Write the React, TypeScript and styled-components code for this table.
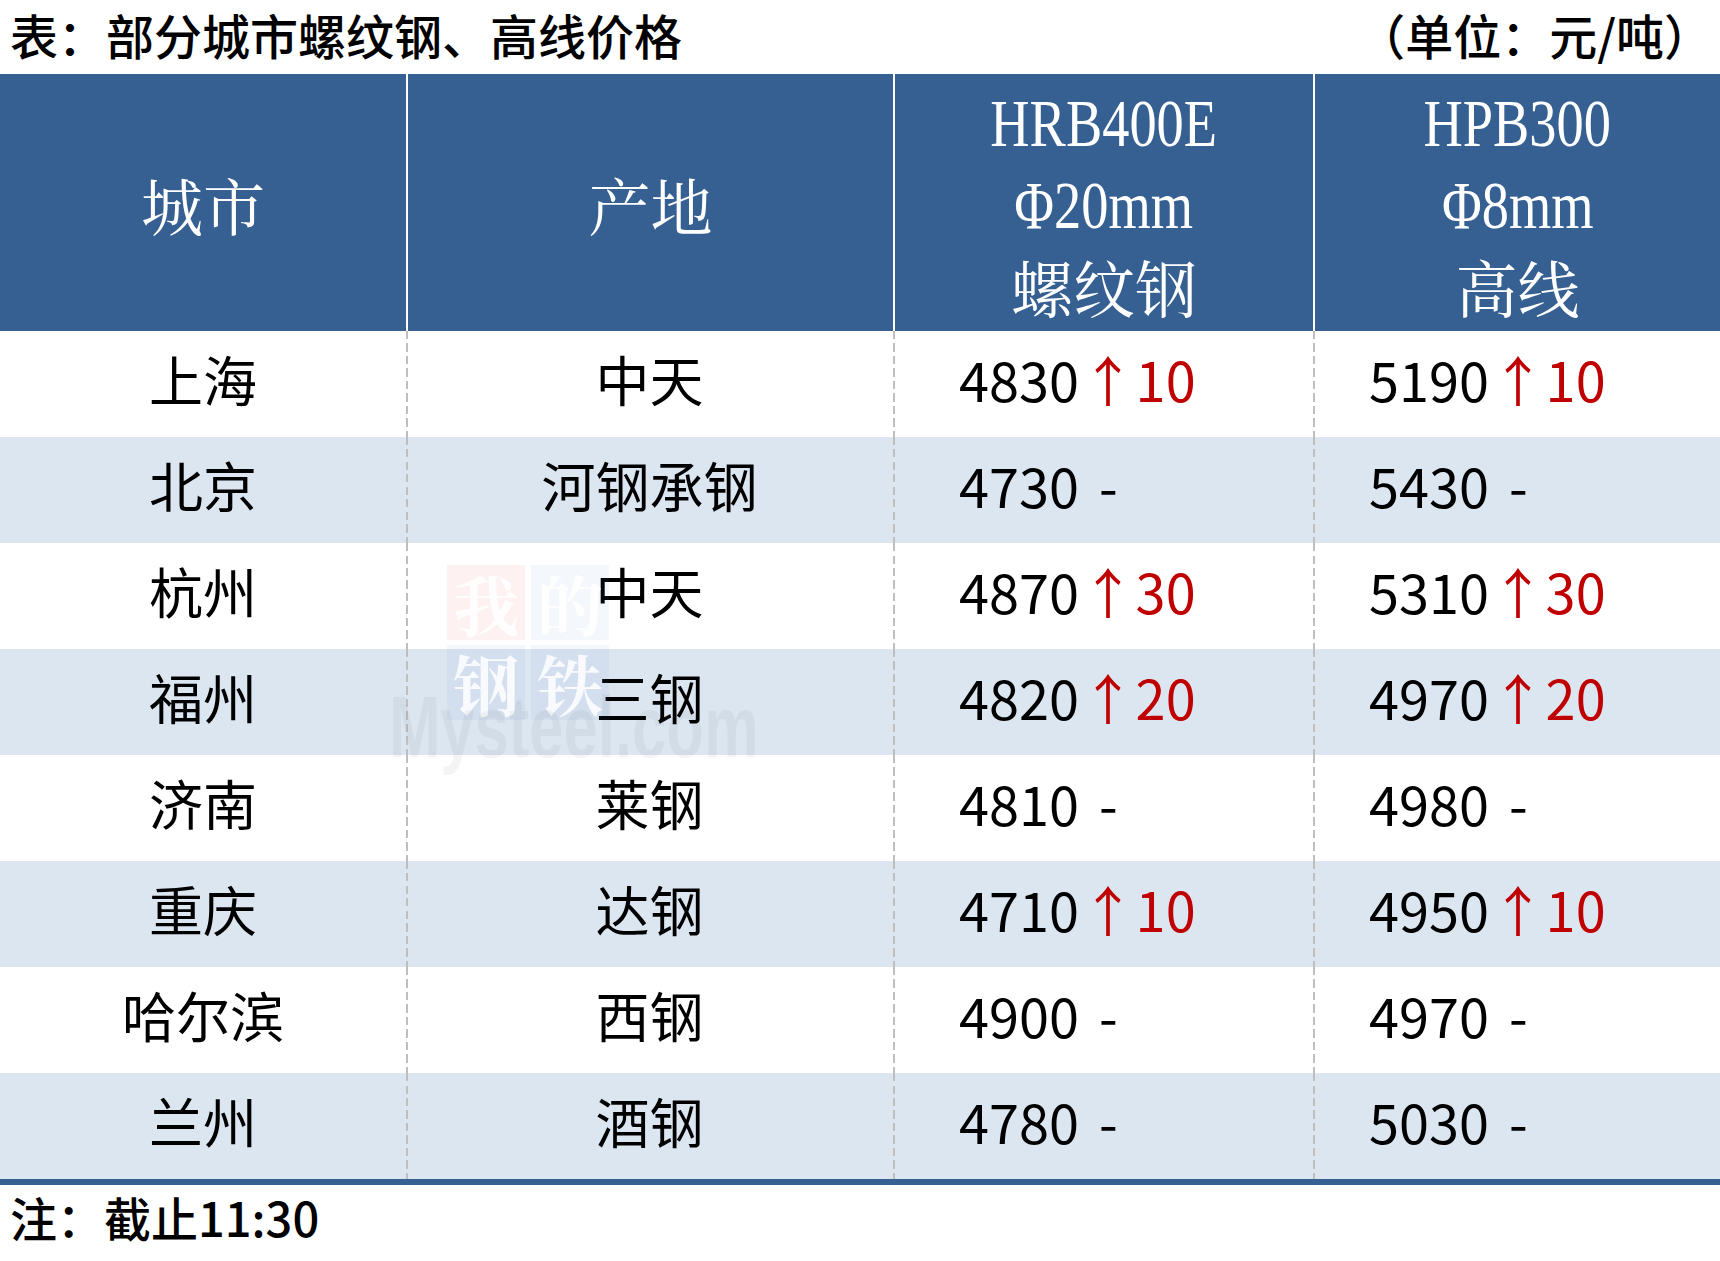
import React from 'react';
import styled, { createGlobalStyle, css } from 'styled-components';

const SANS = `"Noto Sans CJK SC", "Noto Sans", sans-serif`;
const SERIF_CJK = `"Noto Serif CJK SC", "Noto Serif SC", "Noto Sans CJK SC", serif`;

const GlobalStyle = createGlobalStyle`
  html, body {
    margin: 0;
    padding: 0;
    background: #ffffff;
  }
  body {
    font-family: ${SANS};
    color: #000000;
  }
`;

const Page = styled.div`
  width: 1720px;
`;

const TitleBar = styled.div`
  height: 74px;
  box-sizing: border-box;
  padding: 0 8px 6px 10px;
  display: flex;
  align-items: center;
  justify-content: space-between;
  font-family: ${SANS};
  font-size: 48px;
  font-weight: 500;
  line-height: 1;
  white-space: nowrap;
`;

const Frame = styled.div`
  position: relative;
`;

const Grid = styled.div`
  display: grid;
  grid-template-columns: 406px 487px 420px 407px;
  grid-template-rows: 257px;
  grid-auto-rows: 106px;
`;

const HeadCell = styled.div<{ $first?: boolean }>`
  background: #366092;
  color: #ffffff;
  box-sizing: border-box;
  padding-top: 5px;
  display: flex;
  flex-direction: column;
  align-items: center;
  justify-content: center;
  ${(p) =>
    !p.$first &&
    css`
      border-left: 2px solid #ffffff;
    `}
`;

const HeadCJK = styled.div`
  font-family: ${SERIF_CJK};
  font-size: 62px;
  line-height: 82px;
  white-space: nowrap;
`;

const HeadLatin = styled.div`
  display: inline-block;
  font-family: "Liberation Serif", "Times New Roman", serif;
  font-size: 68px;
  line-height: 82px;
  white-space: nowrap;
  transform: scaleX(0.8);
`;

const Cell = styled.div<{ $alt: boolean; $divider: boolean; $indent?: number }>`
  box-sizing: border-box;
  background-color: ${(p) => (p.$alt ? '#DCE6F1' : '#ffffff')};
  ${(p) =>
    p.$divider &&
    css`
      background-image: repeating-linear-gradient(
        to bottom,
        #bfbfbf 0px,
        #bfbfbf 8px,
        transparent 8px,
        transparent 12.5px
      );
      background-size: 2px 100%;
      background-repeat: no-repeat;
      background-position: left top;
    `}
  display: flex;
  align-items: center;
  justify-content: ${(p) => (p.$indent != null ? 'flex-start' : 'center')};
  padding-left: ${(p) => p.$indent ?? 0}px;
  padding-bottom: 10px;
  font-family: ${SANS};
  font-size: 54px;
  line-height: 1;
  white-space: nowrap;
`;

const Up = styled.span`
  color: #c00000;
  margin-left: 2px;
  letter-spacing: 0.5px;
`;

const Dash = styled.span`
  margin-left: 20px;
`;

const Rule = styled.div`
  height: 6px;
  background: #366092;
`;

const Note = styled.div`
  margin-top: 2px;
  padding-left: 10px;
  height: 60px;
  font-family: ${SANS};
  font-size: 47px;
  font-weight: 500;
  line-height: 60px;
  white-space: nowrap;
`;

const Watermark = styled.div`
  position: absolute;
  left: 447px;
  top: 491px;
  pointer-events: none;
`;

const LogoGrid = styled.div`
  display: grid;
  grid-template-columns: 78px 78px;
  grid-template-rows: 75px 75px;
  column-gap: 6px;
  row-gap: 5px;
`;

const LogoTile = styled.div<{ $red?: boolean }>`
  background: ${(p) => (p.$red ? 'rgba(230, 60, 60, 0.07)' : 'rgba(60, 120, 200, 0.06)')};
  color: rgba(255, 255, 255, 0.85);
  display: flex;
  align-items: center;
  justify-content: center;
  font-family: ${SERIF_CJK};
  font-weight: 700;
  font-size: 66px;
  line-height: 1;
`;

const Brand = styled.div`
  position: absolute;
  left: -58px;
  top: 118px;
  font-family: "Liberation Sans", Arial, sans-serif;
  font-weight: 700;
  font-size: 88px;
  line-height: 1;
  color: rgba(0, 0, 0, 0.045);
  transform: scaleX(0.7);
  transform-origin: left top;
  white-space: nowrap;
`;

type Price = { value: string; change?: string };
type Row = { city: string; origin: string; rebar: Price; wire: Price };

const rows: Row[] = [
  { city: '上海', origin: '中天', rebar: { value: '4830', change: '10' }, wire: { value: '5190', change: '10' } },
  { city: '北京', origin: '河钢承钢', rebar: { value: '4730' }, wire: { value: '5430' } },
  { city: '杭州', origin: '中天', rebar: { value: '4870', change: '30' }, wire: { value: '5310', change: '30' } },
  { city: '福州', origin: '三钢', rebar: { value: '4820', change: '20' }, wire: { value: '4970', change: '20' } },
  { city: '济南', origin: '莱钢', rebar: { value: '4810' }, wire: { value: '4980' } },
  { city: '重庆', origin: '达钢', rebar: { value: '4710', change: '10' }, wire: { value: '4950', change: '10' } },
  { city: '哈尔滨', origin: '西钢', rebar: { value: '4900' }, wire: { value: '4970' } },
  { city: '兰州', origin: '酒钢', rebar: { value: '4780' }, wire: { value: '5030' } },
];

const PriceText: React.FC<{ p: Price }> = ({ p }) =>
  p.change ? (
    <>
      {p.value}
      <Up>↑{p.change}</Up>
    </>
  ) : (
    <>
      {p.value}
      <Dash>-</Dash>
    </>
  );

export default function App() {
  return (
    <Page>
      <GlobalStyle />
      <TitleBar>
        <span>表：部分城市螺纹钢、高线价格</span>
        <span>（单位：元/吨）</span>
      </TitleBar>
      <Frame>
        <Grid>
          <HeadCell $first>
            <HeadCJK>城市</HeadCJK>
          </HeadCell>
          <HeadCell>
            <HeadCJK>产地</HeadCJK>
          </HeadCell>
          <HeadCell>
            <HeadLatin>HRB400E</HeadLatin>
            <HeadLatin>Φ20mm</HeadLatin>
            <HeadCJK>螺纹钢</HeadCJK>
          </HeadCell>
          <HeadCell>
            <HeadLatin>HPB300</HeadLatin>
            <HeadLatin>Φ8mm</HeadLatin>
            <HeadCJK>高线</HeadCJK>
          </HeadCell>
          {rows.map((r, i) => {
            const alt = i % 2 === 1;
            return (
              <React.Fragment key={r.city}>
                <Cell $alt={alt} $divider={false}>
                  {r.city}
                </Cell>
                <Cell $alt={alt} $divider>
                  {r.origin}
                </Cell>
                <Cell $alt={alt} $divider $indent={66}>
                  <PriceText p={r.rebar} />
                </Cell>
                <Cell $alt={alt} $divider $indent={56}>
                  <PriceText p={r.wire} />
                </Cell>
              </React.Fragment>
            );
          })}
        </Grid>
        <Rule />
        <Watermark>
          <LogoGrid>
            <LogoTile $red>我</LogoTile>
            <LogoTile>的</LogoTile>
            <LogoTile>钢</LogoTile>
            <LogoTile>铁</LogoTile>
          </LogoGrid>
          <Brand>Mysteel.com</Brand>
        </Watermark>
      </Frame>
      <Note>注：截止11:30</Note>
    </Page>
  );
}
